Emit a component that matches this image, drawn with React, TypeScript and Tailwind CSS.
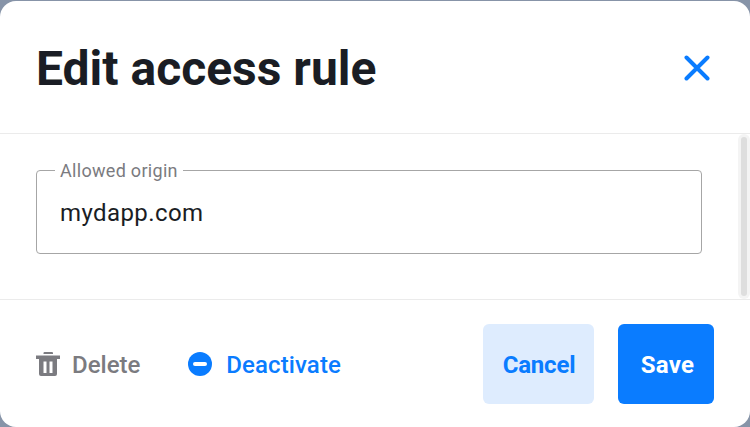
import React from 'react';

const App: React.FC = () => {
  return (
    <div className="h-[427px] w-[750px] overflow-hidden bg-[#8794a8] pt-px font-['Roboto',sans-serif]">
      <div className="flex h-[426px] flex-col rounded-2xl bg-white">

        {/* Header */}
        <div className="flex h-[132px] items-center justify-between pl-9 pr-[40px]">
          <h1 className="pt-1 text-[48px] font-bold leading-none text-[#1a1d24]">Edit access rule</h1>
          <button className="pt-px text-[#0a7cff]">
            <svg width="26" height="26" viewBox="0 0 26 26" fill="none" stroke="currentColor" strokeWidth="4" strokeLinecap="round">
              <path d="M2.5 2.5 L23.5 23.5 M23.5 2.5 L2.5 23.5" />
            </svg>
          </button>
        </div>

        {/* Body */}
        <div className="flex h-[167px] border-y border-[#ebebeb]">
          <div className="flex-1 pl-9 pr-9 pt-[26px]">
            <fieldset className="h-[94px] rounded border border-[#a6a6a6] px-[18px]">
              <legend className="px-[5px] text-[18px] leading-[21px] tracking-[0.3px] text-[#7b7b80]">Allowed origin</legend>
              <div className="pl-[5px] pt-4 text-[24px] leading-8 tracking-[0.4px] text-[#1a1d24]">mydapp.com</div>
            </fieldset>
          </div>
          <div className="flex w-3 justify-center rounded-md bg-[#f4f4f4] py-[3px]">
            <div className="w-1.5 rounded-full bg-[#dedede]" />
          </div>
        </div>

        {/* Footer */}
        <div className="flex flex-1 items-start justify-between pl-9 pr-9 pt-6">
          <div className="flex h-20 items-center gap-[48px] text-[24px] font-medium">
            <button className="flex items-center gap-3 text-[#7b7b80]">
              <svg width="24" height="24" viewBox="0 0 24 24" fill="currentColor">
                <path d="M7.5 1a1 1 0 0 1 1-1h7.5a1 1 0 0 1 1 1v1h-9.5z" />
                <path d="M0 3.5h24v3.5H0z" />
                <path fillRule="evenodd" d="M3 7h18v15a2 2 0 0 1-2 2H5a2 2 0 0 1-2-2z M7.5 9.5v11.5h3V9.5z M13.5 9.5v11.5h3V9.5z" />
              </svg>
              <span className="pt-0.5">Delete</span>
            </button>
            <button className="flex items-center gap-[14px] text-[#0a7cff]">
              <svg width="24" height="24" viewBox="0 0 24 24">
                <circle cx="12" cy="12" r="12" fill="currentColor" />
                <rect x="5" y="10" width="14" height="4" rx="2" fill="#fff" />
              </svg>
              <span className="pt-0.5 tracking-[0.1px]">Deactivate</span>
            </button>
          </div>
          <div className="flex gap-6">
            <button className="h-20 w-[111px] rounded-md bg-[#deecfe] pl-px pt-0.5 text-[24px] font-bold tracking-[-0.2px] text-[#0a7cff]">Cancel</button>
            <button className="h-20 w-24 rounded-md bg-[#0a7cff] pl-[3px] pt-0.5 text-[24px] font-bold tracking-[0.3px] text-white">Save</button>
          </div>
        </div>

      </div>
    </div>
  );
};

export default App;
